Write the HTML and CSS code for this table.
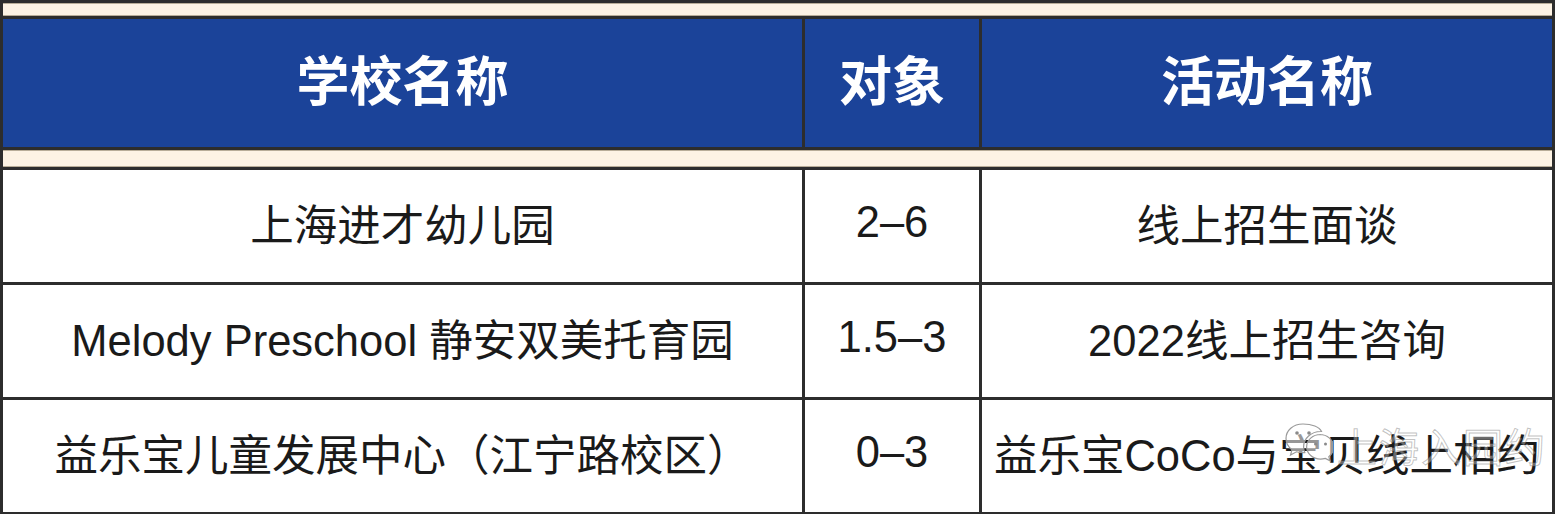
FILE: index.html
```html
<!DOCTYPE html>
<html lang="zh">
<head>
<meta charset="utf-8">
<title>学校活动</title>
<link rel="stylesheet" href="styles.css">
</head>
<body>
<div class="sheet">
  <div class="grid">
    <div class="cream span"></div>
    <div class="head">学校名称</div>
    <div class="head">对象</div>
    <div class="head">活动名称</div>
    <div class="cream span"></div>
    <div class="cell">上海进才幼儿园</div>
    <div class="cell">2–6</div>
    <div class="cell">线上招生面谈</div>
    <div class="cell">Melody Preschool 静安双美托育园</div>
    <div class="cell">1.5–3</div>
    <div class="cell">2022线上招生咨询</div>
    <div class="cell">益乐宝儿童发展中心（江宁路校区）</div>
    <div class="cell">0–3</div>
    <div class="cell">益乐宝CoCo与宝贝线上相约</div>
  </div>
  <div class="watermark">
    <svg class="wm-icon" viewBox="0 0 50 50" width="50" height="50">
      <path d="M20 4C10 4 3 10.5 3 18.5c0 4.6 2.4 8.6 6 11.2L7.5 35l6-3.2c2 .6 4.2.9 6.5.9.6 0 1.2 0 1.8-.1C21 30.8 20.6 28.9 20.6 27c0-8.6 7.6-15.5 17-15.5.3 0 .6 0 .9 0C36.4 7 28.9 4 20 4z" fill="rgba(255,255,255,0.55)" stroke="#9a9a9a" stroke-width="1.2"/>
      <path d="M37.6 14.5c-7.8 0-14 5.5-14 12.3s6.2 12.3 14 12.3c1.7 0 3.3-.3 4.8-.7l4.6 2.5-1.2-4.2c3-2.3 4.8-5.8 4.8-9.9 0-6.8-6.3-12.3-14-12.3z" fill="rgba(255,255,255,0.55)" stroke="#9a9a9a" stroke-width="1.2"/>
      <circle cx="14" cy="13" r="1.8" fill="#8a8a8a"/>
      <circle cx="26" cy="13" r="1.8" fill="#8a8a8a"/>
      <circle cx="32.5" cy="24" r="1.5" fill="#8a8a8a"/>
      <circle cx="42.5" cy="24" r="1.5" fill="#8a8a8a"/>
    </svg>
    <span class="wm-text">上海入园约</span>
  </div>
</div>
</body>
</html>
```

FILE: styles.css
```css
html, body {
  margin: 0;
  padding: 0;
  background: #ffffff;
}

.sheet {
  position: relative;
  width: 1555px;
  height: 514px;
  overflow: hidden;
}

.grid {
  display: grid;
  grid-template-columns: 799px 174px 570px;
  grid-template-rows: 13px 128px 17px 112px 112px 112px;
  gap: 3px;
  padding: 3px;
  background: #2d2d2d;
  font-family: "Liberation Sans", "Noto Sans CJK SC", sans-serif;
}

.cream {
  background: #fdf3e4;
  box-shadow: inset 0 1px 0 #b8ad98, inset 0 -1px 0 #b8ad98;
}

.span {
  grid-column: 1 / -1;
}

.head {
  background: #1b4399;
  color: #ffffff;
  font-weight: 700;
  font-size: 53px;
  display: flex;
  align-items: center;
  justify-content: center;
  padding-bottom: 10px;
}

.cell {
  background: #ffffff;
  color: #1a1a1a;
  font-size: 43.5px;
  display: flex;
  align-items: center;
  justify-content: center;
  white-space: nowrap;
  padding-bottom: 7px;
}

.watermark {
  position: absolute;
  left: 1283px;
  top: 416px;
  display: flex;
  align-items: center;
  gap: 4px;
  pointer-events: none;
}

.wm-text {
  font-family: "Noto Sans CJK SC", sans-serif;
  font-size: 40px;
  color: rgba(255, 255, 255, 0.35);
  -webkit-text-stroke: 1px rgba(120, 120, 120, 0.45);
  letter-spacing: 2px;
}
```
